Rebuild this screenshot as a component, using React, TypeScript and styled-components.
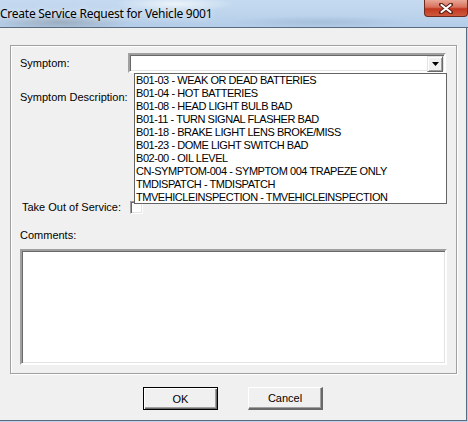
import React from "react";
import styled, { createGlobalStyle } from "styled-components";

const GlobalStyle = createGlobalStyle`
  html, body {
    margin: 0;
    padding: 0;
    background: #b9d1ea;
  }
  body {
    font-family: "Liberation Sans", Arial, sans-serif;
    font-size: 11px;
    color: #000;
  }
`;

const symptoms = [
  "B01-03 - WEAK OR DEAD BATTERIES",
  "B01-04 - HOT BATTERIES",
  "B01-08 - HEAD LIGHT BULB BAD",
  "B01-11 - TURN SIGNAL FLASHER BAD",
  "B01-18 - BRAKE LIGHT LENS BROKE/MISS",
  "B01-23 - DOME LIGHT SWITCH BAD",
  "B02-00 - OIL LEVEL",
  "CN-SYMPTOM-004 - SYMPTOM 004 TRAPEZE ONLY",
  "TMDISPATCH - TMDISPATCH",
  "TMVEHICLEINSPECTION - TMVEHICLEINSPECTION",
];

const Window = styled.div`
  width: 468px;
  height: 422px;
  display: flex;
  flex-direction: column;
  overflow: hidden;
`;

const TitleBar = styled.div`
  height: 27px;
  flex: none;
  display: flex;
  align-items: flex-start;
  background:
    radial-gradient(ellipse 70px 9px at 60px 22px, rgba(120, 130, 140, 0.45), transparent),
    radial-gradient(ellipse 60px 8px at 175px 4px, rgba(255, 255, 255, 0.7), transparent),
    radial-gradient(ellipse 90px 6px at 320px 22px, rgba(150, 175, 205, 0.5), transparent),
    linear-gradient(to bottom, #c5daf0 0%, #bcd3ec 60%, #b3cce8 100%);
  border-bottom: 1px solid #5a6b7d;
`;

const Title = styled.span`
  font-family: "Noto Sans", "Open Sans", sans-serif;
  font-size: 12px;
  line-height: 27px;
  letter-spacing: -0.25px;
  white-space: nowrap;
  text-shadow: 0 0 6px rgba(255, 255, 255, 0.9);
`;

const CloseButton = styled.div`
  margin-left: auto;
  width: 44px;
  height: 17px;
  box-sizing: border-box;
  border: 1px solid #6d2a1f;
  border-top: none;
  border-radius: 0 0 4px 4px;
  background: linear-gradient(to bottom, #e9a797 0%, #d8705c 45%, #c1371f 55%, #cf5a3e 100%);
  display: flex;
  align-items: center;
  justify-content: center;
`;

const Body = styled.div`
  flex: 1;
  display: flex;
  flex-direction: column;
  align-items: stretch;
  background: #f0f0f0;
  padding: 17px 9px 0 10px;
  border-right: 1px solid #5a6b7d;
  border-bottom: 1px solid #5a6b7d;
  margin-right: 1px;
  margin-bottom: 1px;
`;

const GroupBox = styled.div`
  height: 329px;
  box-sizing: border-box;
  border: 1px solid #a0a0a0;
  box-shadow: inset 1px 1px 0 #fff, 1px 1px 0 #fff;
  padding: 7px 9px 7px 9px;
  display: flex;
  flex-direction: column;
`;

const Row = styled.div<{ $height: number; $top?: number }>`
  display: flex;
  align-items: flex-start;
  height: ${(p) => p.$height}px;
  margin-top: ${(p) => p.$top ?? 0}px;
`;

const Label = styled.span<{ $indent?: number; $lh?: number }>`
  width: ${(p) => 108 - (p.$indent ?? 0)}px;
  padding-left: ${(p) => p.$indent ?? 0}px;
  flex: none;
  line-height: ${(p) => p.$lh ?? 13}px;
  white-space: nowrap;
`;

const sunken = `
  border-style: solid;
  border-width: 2px;
  border-color: #a0a0a0 #fff #fff #a0a0a0;
  box-shadow: inset 1px 1px 0 #696969, inset -1px -1px 0 #e3e3e3;
`;

const Combo = styled.div`
  position: relative;
  width: 318px;
  height: 20px;
  box-sizing: border-box;
  background: #fff;
  ${sunken}
  display: flex;
  justify-content: flex-end;
  padding: 1px;
`;

const ArrowButton = styled.div`
  width: 16px;
  height: 16px;
  box-sizing: border-box;
  background: #f0f0f0;
  border-style: solid;
  border-width: 1px;
  border-color: #e3e3e3 #696969 #696969 #e3e3e3;
  box-shadow: inset 1px 1px 0 #fff, inset -1px -1px 0 #a0a0a0;
  display: flex;
  align-items: center;
  justify-content: center;
`;

// the open drop-down of the symptom combo, drawn over the rows beneath it
const DropList = styled.ul`
  position: absolute;
  top: 18px;
  left: 4px;
  width: 313px;
  height: 131px;
  box-sizing: border-box;
  margin: 0;
  padding: 0;
  list-style: none;
  background: #fff;
  border: 1px solid #646464;
  z-index: 2;
`;

const DropItem = styled.li`
  height: 13px;
  line-height: 13px;
  padding-left: 1px;
  white-space: nowrap;
  letter-spacing: -0.45px;
`;

const CheckBox = styled.div`
  width: 13px;
  height: 13px;
  box-sizing: border-box;
  margin-left: 2px;
  background: #fff;
  border-style: solid;
  border-width: 1px;
  border-color: #a0a0a0 #fff #fff #a0a0a0;
  box-shadow: inset 1px 1px 0 #696969, inset -1px -1px 0 #e3e3e3;
`;

const TextArea = styled.div`
  margin-top: 7px;
  height: 116px;
  box-sizing: border-box;
  background: #fff;
  ${sunken}
`;

const ButtonRow = styled.div`
  display: flex;
  justify-content: center;
  gap: 30px;
  margin-top: 13px;
  padding-right: 1px;
`;

const Button = styled.div<{ $default?: boolean }>`
  width: 75px;
  height: 23px;
  box-sizing: border-box;
  display: flex;
  align-items: center;
  justify-content: center;
  background: #f0f0f0;
  border-style: solid;
  border-width: ${(p) => (p.$default ? "1px" : "1px 2px 2px 1px")};
  border-color: ${(p) => (p.$default ? "#000" : "#fff #696969 #696969 #fff")};
  box-shadow: ${(p) =>
    p.$default
      ? "inset 1px 1px 0 #fff, inset -1px -1px 0 #696969, inset -2px -2px 0 #a0a0a0"
      : "inset -1px -1px 0 #a0a0a0"};
`;

export default function App() {
  return (
    <>
      <GlobalStyle />
      <Window>
        <TitleBar>
          <Title>Create Service Request for Vehicle 9001</Title>
          <CloseButton>
            <svg width="14" height="11" viewBox="0 0 14 11">
              <path d="M2 1.5 L12 9.5 M12 1.5 L2 9.5" stroke="#5a1d12" strokeWidth="4" strokeLinecap="round" />
              <path d="M2.5 2 L11.5 9 M11.5 2 L2.5 9" stroke="#fff" strokeWidth="2.2" strokeLinecap="round" />
            </svg>
          </CloseButton>
        </TitleBar>
        <Body>
          <GroupBox>
            <Row $height={20}>
              <Label $lh={20}>Symptom:</Label>
              <Combo>
                <ArrowButton>
                  <svg width="7" height="4" viewBox="0 0 7 4">
                    <path d="M0 0 H7 L3.5 4 Z" fill="#000" />
                  </svg>
                </ArrowButton>
                <DropList>
                  {symptoms.map((s) => (
                    <DropItem key={s}>{s}</DropItem>
                  ))}
                </DropList>
              </Combo>
            </Row>
            <Row $height={110} $top={18}>
              <Label>Symptom Description:</Label>
            </Row>
            <Row $height={13}>
              <Label $indent={2}>Take Out of Service:</Label>
              <CheckBox />
            </Row>
            <Row $height={13} $top={15}>
              <Label>Comments:</Label>
            </Row>
            <TextArea />
          </GroupBox>
          <ButtonRow>
            <Button $default>OK</Button>
            <Button>Cancel</Button>
          </ButtonRow>
        </Body>
      </Window>
    </>
  );
}
